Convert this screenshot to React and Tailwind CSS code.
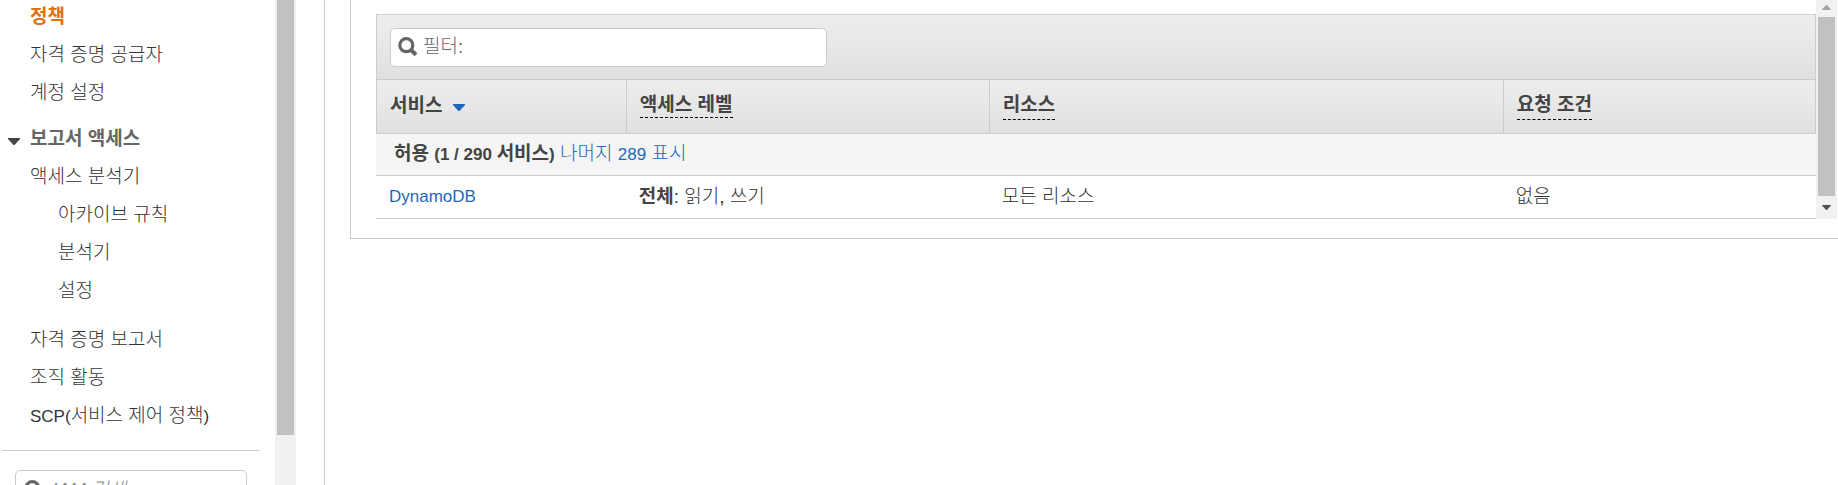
import React, { useState } from 'react';

const mainLinks = [
  { label: '정책', active: true },
  { label: '자격 증명 공급자' },
  { label: '계정 설정' }
];

const analyzerLinks = ['아카이브 규칙', '분석기', '설정'];

const rows = [
  { service: 'DynamoDB', level: '전체', access: '읽기, 쓰기', resource: '모든 리소스', condition: '없음' }
];

const SearchIcon = ({ className }) => (
  <svg viewBox="0 0 20 20" className={className} fill="none" stroke="#666" aria-hidden="true">
    <circle cx="8.3" cy="8.2" r="6.5" strokeWidth="3.2" />
    <path d="M13 13l5 4.8" strokeWidth="4" />
  </svg>
);

const Caret = ({ className }) => (
  <svg viewBox="0 0 12 7" className={className} fill="currentColor" aria-hidden="true">
    <path d="M0 0h12v1L6.5 7h-1L0 1z" />
  </svg>
);

// Latin letters and digits run a bit smaller than the Korean text
const Latin = ({ children }) => <span className="text-[17px]">{children}</span>;

const NavItem = ({ children, active, nested }) => (
  <li className={`flex h-[38px] items-center ${nested ? 'pl-7' : ''}`}>
    <a href="#" className={active ? 'font-bold text-[#e07010]' : 'text-[#333]'}>{children}</a>
  </li>
);

const Sidebar = () => {
  const [open, setOpen] = useState(true);

  return (
    <div className="flex w-[296px] shrink-0">
      <nav className="min-w-0 flex-1 pr-[15px] pl-0.5">
        <ul className="-mt-0.5 pl-7">
          {mainLinks.map((link) => (
            <NavItem key={link.label} active={link.active}>{link.label}</NavItem>
          ))}
        </ul>
        <button
          onClick={() => setOpen(!open)}
          className="mt-2 flex h-[38px] items-center pl-1.5 font-bold text-[#666]"
        >
          <Caret className="mt-1 mr-2.5 h-[7px] w-3 text-[#444]" />
          보고서 액세스
        </button>
        {open && (
          <ul className="pl-7">
            <NavItem>액세스 분석기</NavItem>
            {analyzerLinks.map((label) => (
              <NavItem key={label} nested>{label}</NavItem>
            ))}
          </ul>
        )}
        <ul className="mt-[11px] pl-7">
          <NavItem>자격 증명 보고서</NavItem>
          <NavItem>조직 활동</NavItem>
          <NavItem><Latin>SCP(</Latin>서비스 제어 정책<Latin>)</Latin></NavItem>
        </ul>
        <hr className="mt-[15px] border-[#ccc]" />
        <label className="mt-[19px] mr-[13px] ml-[13px] flex h-10 items-center rounded-[5px] border border-[#ccc] pl-2">
          <SearchIcon className="mr-2 h-5 w-5 shrink-0" />
          <input
            type="text"
            aria-label="IAM 검색"
            placeholder="IAM 검색"
            className="w-full min-w-0 font-light italic outline-none placeholder:text-[#888]"
          />
        </label>
      </nav>
      {/* Scrollbar */}
      <div className="w-[21px] bg-[#f1f1f1] px-0.5">
        <div className="h-[435px] bg-[#c1c1c1]" />
      </div>
    </div>
  );
};

const HeaderCell = ({ children, className }) => (
  <th className={`border-l border-[#ccc] pb-0.5 pl-[13px] text-left font-bold ${className}`}>{children}</th>
);

const PolicyTable = () => {
  const [filter, setFilter] = useState('');

  return (
    <div className="min-w-0 flex-1 pt-3.5">
      <div className="flex h-[65px] items-center border border-b-0 border-[#ccc] bg-linear-to-b from-[#eee] to-[#e0e0e0] pl-[13px]">
        <label className="flex h-[39px] w-[437px] items-center rounded-[5px] border border-[#ccc] bg-white pl-[7px]">
          <SearchIcon className="mr-[5px] h-5 w-5 shrink-0" />
          <input
            type="text"
            aria-label="필터"
            placeholder="필터:"
            value={filter}
            onChange={(e) => setFilter(e.target.value)}
            className="w-full min-w-0 font-light outline-none placeholder:text-[#666]"
          />
        </label>
      </div>
      <table className="w-full table-fixed border-separate border-spacing-0">
        <thead className="text-[#444]">
          <tr className="h-[55px] bg-linear-to-b from-[#eee] to-[#e0e0e0] [&>th]:border-y">
            <HeaderCell className="w-[17.35%]">
              <button className="flex items-center font-bold">
                서비스
                <Caret className="mt-1 ml-[11px] h-[7px] w-3 text-[#1b68bd]" />
              </button>
            </HeaderCell>
            <HeaderCell className="w-[25.2%]">
              <span className="inline-block border-b border-dashed border-black leading-6">액세스 레벨</span>
            </HeaderCell>
            <HeaderCell className="w-[35.7%]">
              <span className="inline-block border-b border-dashed border-black leading-7">리소스</span>
            </HeaderCell>
            <HeaderCell className="border-r">
              <span className="inline-block border-b border-dashed border-black leading-7">요청 조건</span>
            </HeaderCell>
          </tr>
        </thead>
        <tbody className="[&_td]:border-b [&_td]:border-[#ccc]">
          <tr className="h-[42px] bg-[#f5f5f5]">
            <td colSpan={4} className="pb-px pl-[18px]">
              <strong className="font-bold text-[#444]">허용 <Latin>(1 / 290 </Latin>서비스<Latin>)</Latin></strong>{' '}
              <a href="#" className="text-[#1b68bd]">나머지 <Latin>289</Latin> 표시</a>
            </td>
          </tr>
          {rows
            .filter((row) => row.service.toLowerCase().includes(filter.toLowerCase()))
            .map((row) => (
              <tr key={row.service} className="h-[43px] [&>td]:pb-px">
                <td className="pl-[13px]">
                  <a href="#" className="text-[#1b68bd]"><Latin>{row.service}</Latin></a>
                </td>
                <td className="pl-[13px]">
                  <strong className="font-bold text-[#444]">{row.level}</strong>: {row.access}
                </td>
                <td className="pl-[13px]">{row.resource}</td>
                <td className="pl-[13px]">{row.condition}</td>
              </tr>
            ))}
        </tbody>
      </table>
    </div>
  );
};

const App = () => {
  return (
    <div className="flex h-screen overflow-hidden bg-white font-['Liberation_Sans','Noto_Sans_CJK_KR',sans-serif] text-[19px] leading-6 font-light text-[#333]">
      <Sidebar />
      <main className="ml-7 min-w-0 flex-1 border-l border-[#ccc] pl-[25px]">
        <div className="border-b border-l border-[#ccc] pb-[19px] pl-[25px]">
          <div className="flex pr-px">
            <PolicyTable />
            {/* Scrollbar */}
            <div className="flex w-[21px] flex-col items-center bg-[#f1f1f1] px-0.5">
              <Caret className="my-[5px] h-[5px] w-[9px] shrink-0 rotate-180 text-[#a3a3a3]" />
              <div className="mt-0.5 w-full flex-1 bg-[#c1c1c1]" />
              <Caret className="my-[9px] h-[5px] w-[9px] shrink-0 text-[#505050]" />
            </div>
          </div>
        </div>
      </main>
    </div>
  );
};

export default App;
